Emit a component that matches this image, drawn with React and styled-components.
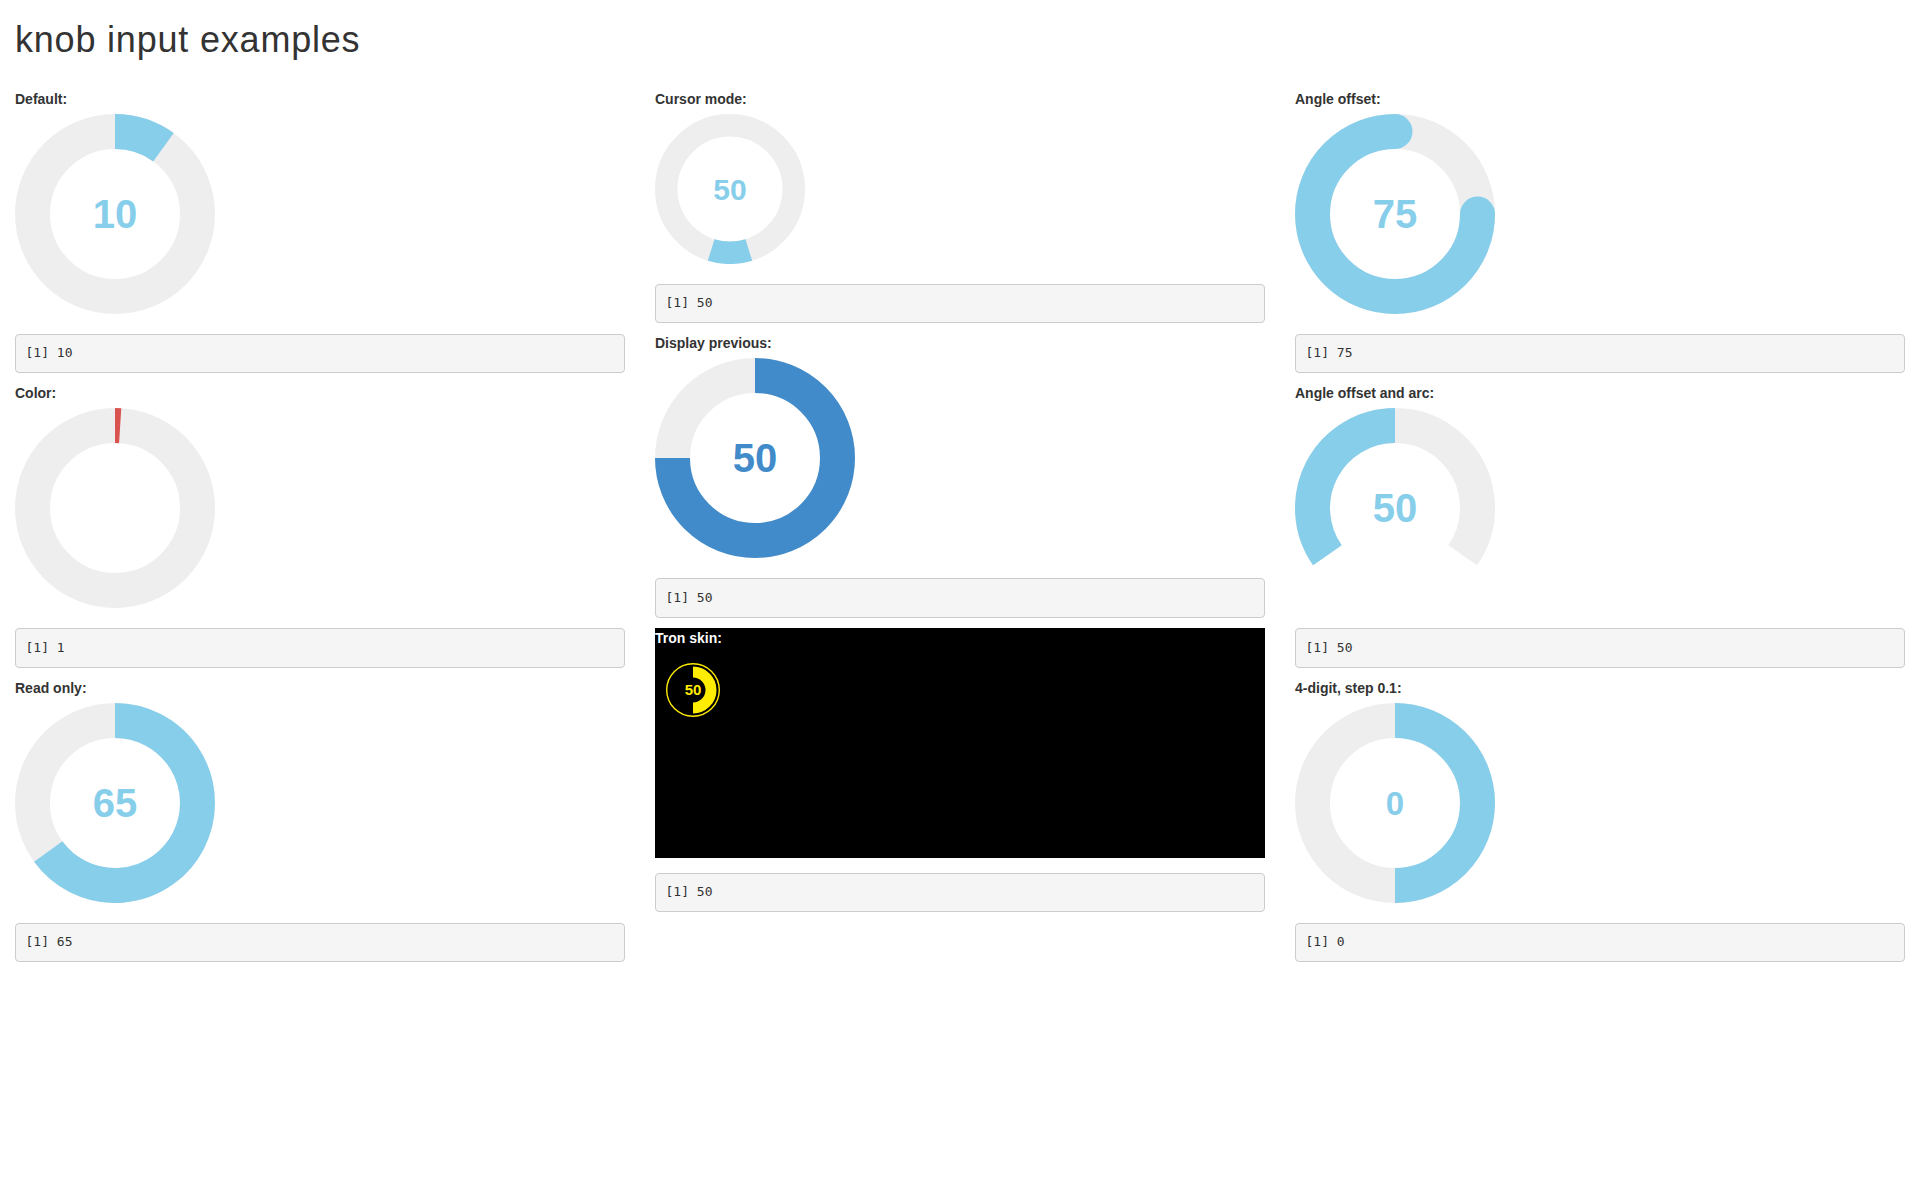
import styled, { createGlobalStyle } from 'styled-components'

const GlobalStyle = createGlobalStyle`
  body {
    margin: 0;
    background: #fff;
    color: #333;
    font-family: "Liberation Sans", Helvetica, Arial, sans-serif;
    font-size: 14px;
    line-height: 1.42857;
  }
`

const Page = styled.div`
  padding: 0 15px;
`

const Title = styled.h1`
  margin: 20px 0 10px;
  font-size: 36px;
  font-weight: 500;
  line-height: 1.1;
  letter-spacing: 0.8px;
  color: #333;
`

const Grid = styled.div`
  display: grid;
  grid-template-columns: repeat(3, 1fr);
  column-gap: 30px;
  padding-top: 19px;
  align-items: start;
`

const Column = styled.div`
  display: flex;
  flex-direction: column;
`

const FormGroup = styled.div`
  margin-bottom: 15px;
  background: ${p => (p.$dark ? '#000' : 'transparent')};
  height: ${p => (p.$height ? `${p.$height}px` : 'auto')};
`

const Label = styled.label`
  display: block;
  margin-bottom: 5px;
  font-weight: bold;
  line-height: 20px;
  color: ${p => (p.$light ? '#fff' : '#333')};
`

const KnobSvg = styled.svg`
  display: block;
  margin: ${p => p.$margin || '0 0 5px 0'};
`

const Output = styled.pre`
  margin: 0 0 10px;
  padding: 9.5px;
  font-family: "DejaVu Sans Mono", Menlo, Consolas, monospace;
  font-size: 13px;
  line-height: 1.42857;
  color: #333;
  background: #f5f5f5;
  border: 1px solid #ccc;
  border-radius: 4px;
  white-space: pre;
`

const BG = '#EEEEEE'
const SKY = '#87CEEB'

const rad = d => (d * Math.PI) / 180

// arc from a1 to a2 in degrees, canvas style (0 = right, clockwise)
function arcPath(cx, cy, r, a1, a2) {
  const span = a2 - a1
  if (span >= 359.999) {
    return `M ${cx + r} ${cy} A ${r} ${r} 0 1 1 ${cx - r} ${cy} A ${r} ${r} 0 1 1 ${cx + r} ${cy}`
  }
  const x1 = cx + r * Math.cos(rad(a1))
  const y1 = cy + r * Math.sin(rad(a1))
  const x2 = cx + r * Math.cos(rad(a2))
  const y2 = cy + r * Math.sin(rad(a2))
  return `M ${x1} ${y1} A ${r} ${r} 0 ${span > 180 ? 1 : 0} 1 ${x2} ${y2}`
}

function Knob({
  size = 200,
  thickness = 0.35,
  start = -90,
  arc = 360,
  value = 0,
  fg = SKY,
  cap = 'butt',
  cursor = false,
  text,
  fontSize,
}) {
  const c = size / 2
  const lw = c * thickness
  const r = c - lw / 2
  let a1 = start
  let a2 = start + arc * value
  if (cursor) {
    const ext = 0.3 * 180 / Math.PI
    a1 = a2 - ext
    a2 = a2 + ext
  }
  const fs = fontSize || Math.floor(size / 5)
  return (
    <KnobSvg width={size} height={size} viewBox={`0 0 ${size} ${size}`}>
      <path d={arcPath(c, c, r, start, start + arc)} fill="none" stroke={BG} strokeWidth={lw} />
      {a2 > a1 && (
        <path d={arcPath(c, c, r, a1, a2)} fill="none" stroke={fg} strokeWidth={lw} strokeLinecap={cap} />
      )}
      {text !== undefined && (
        <text
          x={c}
          y={c + fs * 0.358}
          textAnchor="middle"
          fontFamily="'Liberation Sans', Arial, sans-serif"
          fontWeight="bold"
          fontSize={fs}
          fill={fg}
        >
          {text}
        </text>
      )}
    </KnobSvg>
  )
}

function TronKnob() {
  const y = '#ffec03'
  return (
    <KnobSvg width={60} height={60} viewBox="0 0 60 60" $margin="12px 0 0 8px">
      <circle cx={30} cy={30} r={26.3} fill="none" stroke={y} strokeWidth={1.4} />
      <path d={arcPath(30, 30, 18, -90, 90)} fill="none" stroke={y} strokeWidth={11} />
      <text
        x={30}
        y={30 + 15 * 0.358}
        textAnchor="middle"
        fontFamily="'Liberation Sans', Arial, sans-serif"
        fontWeight="bold"
        fontSize={15}
        fill={y}
      >
        50
      </text>
    </KnobSvg>
  )
}

function KnobField({ label, out, ...knob }) {
  return (
    <>
      <FormGroup>
        <Label>{label}</Label>
        <Knob {...knob} />
      </FormGroup>
      <Output>{out}</Output>
    </>
  )
}

export default function App() {
  return (
    <>
      <GlobalStyle />
      <Page>
        <Title>knob input examples</Title>
        <Grid>
          <Column>
            <KnobField label="Default:" out="[1] 10" value={0.1} text="10" />
            <KnobField label="Color:" out="[1] 1" value={0.01} fg="#D9534F" />
            <KnobField label="Read only:" out="[1] 65" value={0.65} text="65" />
          </Column>
          <Column>
            <KnobField label="Cursor mode:" out="[1] 50" size={150} thickness={0.3} value={0.5} cursor text="50" />
            <KnobField label="Display previous:" out="[1] 50" value={0.75} fg="#428BCA" text="50" />
            <FormGroup $dark $height={230}>
              <Label $light>Tron skin:</Label>
              <TronKnob />
            </FormGroup>
            <Output>[1] 50</Output>
          </Column>
          <Column>
            <KnobField label="Angle offset:" out="[1] 75" start={0} value={0.75} cap="round" text="75" />
            <KnobField label="Angle offset and arc:" out="[1] 50" start={145} arc={250} value={0.5} text="50" />
            <KnobField label="4-digit, step 0.1:" out="[1] 0" value={0.5} text="0" fontSize={33} />
          </Column>
        </Grid>
      </Page>
    </>
  )
}
